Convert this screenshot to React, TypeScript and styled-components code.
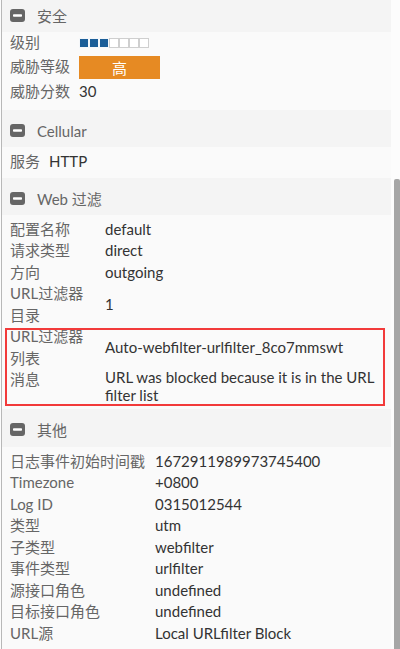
import React from "react";
import styled, { createGlobalStyle } from "styled-components";

const Global = createGlobalStyle`
  html, body { margin: 0; padding: 0; height: 100%; overflow: hidden; background: #fcfcfc; }
  body { font-family: Lato, "Noto Sans CJK SC", sans-serif; font-size: 15px; }
`;

const Frame = styled.div`
  display: flex;
  height: 649px;
  overflow: hidden;
`;

const Panel = styled.div`
  width: 389px;
  margin-left: 1px;
  margin-top: -5px;
  border-left: 1px solid #b8b8b8;
  display: flex;
  flex-direction: column;
`;

const ScrollTrack = styled.div`
  flex: 1;
  display: flex;
  flex-direction: column;
  align-items: flex-end;
  padding-top: 179px;
`;

const Thumb = styled.div`
  width: 6px;
  flex: 1;
  background: #a6a6a6;
  border-radius: 2px 2px 0 0;
`;

const Header = styled.div`
  height: 38px;
  box-sizing: border-box;
  padding: 4px 0 0 8px;
  display: flex;
  align-items: center;
  gap: 12px;
  background: #f4f4f4;
  color: #666;
  font-size: 15px;
`;

const Body = styled.div<{ $first?: boolean }>`
  background: #fafafa;
  padding: ${(p) => (p.$first ? "0 8px 8px" : "4px 8px 5px")};
  display: flex;
  flex-direction: column;
`;

const Row = styled.div<{ $w: number }>`
  display: grid;
  grid-template-columns: ${(p) => p.$w}px 1fr;
  column-gap: 9px;
`;

const Label = styled.div<{ $center?: boolean }>`
  line-height: 21.5px;
  color: #666;
  align-self: ${(p) => (p.$center ? "center" : "start")};
`;

const Value = styled.div`
  line-height: 17.5px;
  color: #333;
  align-self: center;
`;

const Levels = styled.div`
  display: flex;
  align-self: center;
`;

const Square = styled.span<{ $on: boolean }>`
  width: 10px;
  height: 10px;
  box-sizing: border-box;
  border: 1px solid ${(p) => (p.$on ? "#f4f7fa" : "#cfcfcf")};
  background: ${(p) => (p.$on ? "#1b5e98" : "#ffffff")};
`;

const Badge = styled.div`
  width: 81px;
  height: 23px;
  margin: 2px 0;
  background: #e68a23;
  color: #fff;
  display: flex;
  align-items: center;
  justify-content: center;
  font-size: 15px;
  align-self: center;
`;

const Highlight = styled.div`
  position: relative;
  display: flex;
  flex-direction: column;
  &::after {
    content: "";
    position: absolute;
    left: -5px;
    right: -2px;
    top: 2px;
    bottom: -2px;
    border: 2px solid #f23a3a;
    pointer-events: none;
  }
`;

const MinusIcon = () => (
  <svg width="15" height="13" viewBox="0 0 15 13">
    <rect x="0" y="0" width="15" height="13" rx="3" fill="#666" />
    <rect x="3" y="5.2" width="9" height="2.6" rx="0.8" fill="#fff" />
  </svg>
);

const SectionHeader = ({ title }: { title: string }) => (
  <Header>
    <MinusIcon />
    <span>{title}</span>
  </Header>
);

type KV = [string, string];

const KVRows = ({ rows, w }: { rows: KV[]; w: number }) => (
  <>
    {rows.map(([k, v]) => (
      <Row $w={w} key={k}>
        <Label>{k}</Label>
        <Value>{v}</Value>
      </Row>
    ))}
  </>
);

export default function App() {
  return (
    <Frame>
      <Global />
      <Panel>
        <SectionHeader title="安全" />
        <Body $first>
          <Row $w={60}>
            <Label>级别</Label>
            <Levels>
              {[0, 1, 2, 3, 4, 5, 6].map((i) => (
                <Square key={i} $on={i < 3} />
              ))}
            </Levels>
          </Row>
          <Row $w={60}>
            <Label $center>威胁等级</Label>
            <Badge>高</Badge>
          </Row>
          <KVRows w={60} rows={[["威胁分数", "30"]]} />
        </Body>

        <SectionHeader title="Cellular" />
        <Body>
          <KVRows w={30} rows={[["服务", "HTTP"]]} />
        </Body>

        <SectionHeader title="Web 过滤" />
        <Body>
          <KVRows
            w={86}
            rows={[
              ["配置名称", "default"],
              ["请求类型", "direct"],
              ["方向", "outgoing"],
              ["URL过滤器目录", "1"],
            ]}
          />
          <Highlight>
            <KVRows
              w={86}
              rows={[
                ["URL过滤器列表", "Auto-webfilter-urlfilter_8co7mmswt"],
                ["消息", "URL was blocked because it is in the URL filter list"],
              ]}
            />
          </Highlight>
        </Body>

        <SectionHeader title="其他" />
        <Body>
          <KVRows
            w={136}
            rows={[
              ["日志事件初始时间戳", "1672911989973745400"],
              ["Timezone", "+0800"],
              ["Log ID", "0315012544"],
              ["类型", "utm"],
              ["子类型", "webfilter"],
              ["事件类型", "urlfilter"],
              ["源接口角色", "undefined"],
              ["目标接口角色", "undefined"],
              ["URL源", "Local URLfilter Block"],
            ]}
          />
        </Body>
      </Panel>
      <ScrollTrack>
        <Thumb />
      </ScrollTrack>
    </Frame>
  );
}
